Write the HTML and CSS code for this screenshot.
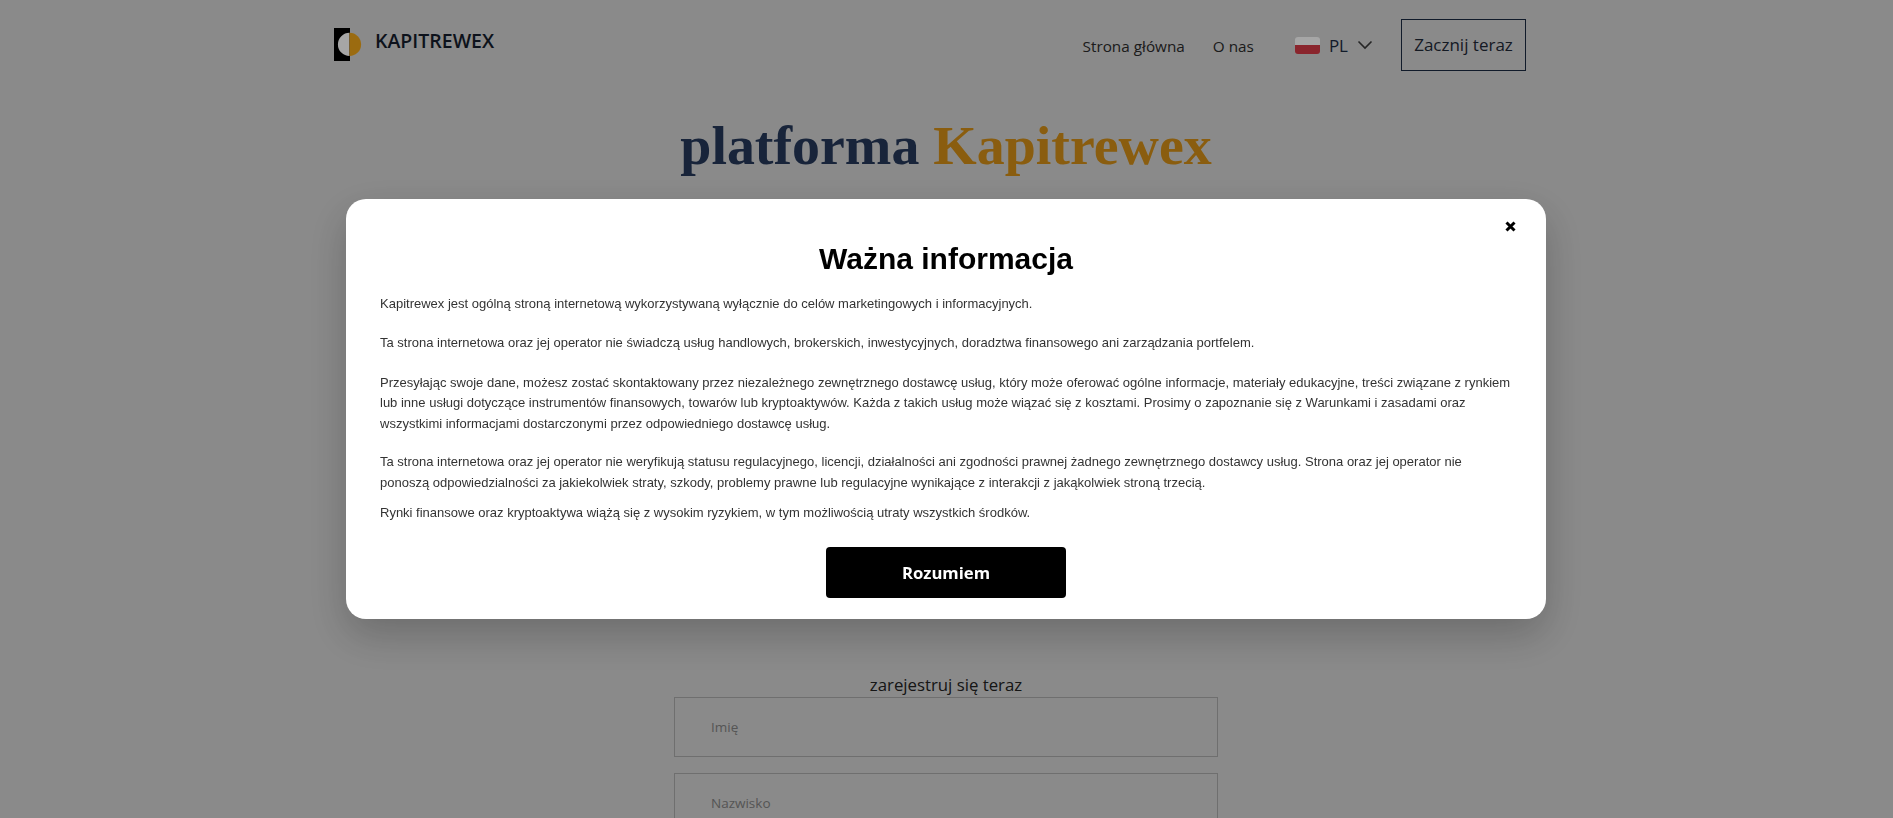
FILE: index.html
```html
<!DOCTYPE html>
<html lang="pl">
<head>
<meta charset="utf-8">
<title>Kapitrewex</title>
<link rel="stylesheet" href="styles.css">
</head>
<body>
<div class="page">
  <header class="header">
    <a class="brand">
      <svg class="brand-icon" viewBox="0 0 28 33" width="28" height="33">
        <rect x="0" y="0" width="16" height="33" fill="#000"/>
        <path d="M15.500 4.800 A11.600 11.600 0 0 0 15.500 28 Z" fill="#fff"/>
        <path d="M15.500 4.800 A11.600 11.600 0 0 1 15.500 28 Z" fill="#eea51a"/>
      </svg>
      <span class="brand-name">KAPITREWEX</span>
    </a>
    <nav class="nav">
      <a class="nav-link">Strona główna</a>
      <a class="nav-link">O nas</a>
      <div class="lang">
        <span class="flag"><span class="flag-top"></span><span class="flag-bottom"></span></span>
        <span class="lang-code">PL</span>
        <svg class="chevron" viewBox="0 0 16 10" width="16" height="10"><path d="M1.500 1.500 L8 8 L14.500 1.500" fill="none" stroke="#3a3a3a" stroke-width="1.600"/></svg>
      </div>
      <a class="cta">Zacznij teraz</a>
    </nav>
  </header>
  <h1 class="title">platforma <span class="accent">Kapitrewex</span></h1>
  <section class="register">
    <p class="register-title">zarejestruj się teraz</p>
    <div class="field">Imię</div>
    <div class="field">Nazwisko</div>
  </section>
</div>
<div class="overlay">
  <div class="modal">
    <svg class="close" viewBox="0 0 11 11" width="11" height="11"><path d="M1.500 1.500 L9.500 9.500 M9.500 1.500 L1.500 9.500" fill="none" stroke="#000" stroke-width="3"/></svg>
    <h2 class="modal-title">Ważna informacja</h2>
    <p class="para gap-first">Kapitrewex jest ogólną stroną internetową wykorzystywaną wyłącznie do celów marketingowych i informacyjnych.</p>
    <p class="para gap">Ta strona internetowa oraz jej operator nie świadczą usług handlowych, brokerskich, inwestycyjnych, doradztwa finansowego ani zarządzania portfelem.</p>
    <p class="para gap-long">Przesyłając swoje dane, możesz zostać skontaktowany przez niezależnego zewnętrznego dostawcę usług, który może oferować ogólne informacje, materiały edukacyjne, treści związane z rynkiem lub inne usługi dotyczące instrumentów finansowych, towarów lub kryptoaktywów. Każda z takich usług może wiązać się z kosztami. Prosimy o zapoznanie się z Warunkami i zasadami oraz wszystkimi informacjami dostarczonymi przez odpowiedniego dostawcę usług.</p>
    <p class="para small-gap">Ta strona internetowa oraz jej operator nie weryfikują statusu regulacyjnego, licencji, działalności ani zgodności prawnej żadnego zewnętrznego dostawcy usług. Strona oraz jej operator nie ponoszą odpowiedzialności za jakiekolwiek straty, szkody, problemy prawne lub regulacyjne wynikające z interakcji z jakąkolwiek stroną trzecią.</p>
    <p class="para">Rynki finansowe oraz kryptoaktywa wiążą się z wysokim ryzykiem, w tym możliwością utraty wszystkich środków.</p>
    <button class="confirm">Rozumiem</button>
  </div>
</div>
</body>
</html>
```
FILE: styles.css
```css
* { box-sizing: border-box; }
html, body { margin: 0; height: 100%; overflow: hidden; }
body { background: #d4d4d4; font-family: "Open Sans", sans-serif; color: #1f2937; padding-right: 1px; }
.page { width: 1200px; margin: 0 auto; }
.header { display: flex; justify-content: space-between; align-items: flex-start; padding-top: 19px; height: 113px; }
.brand { display: flex; align-items: flex-start; gap: 13px; margin-left: -12px; padding-top: 9px; }
.brand-icon { display: block; }
.brand-name { font-size: 19.500px; font-weight: 600; line-height: 26px; color: #141c2b; }
.nav { display: flex; align-items: center; font-size: 15.300px; margin-right: 20px; }
.nav-link { color: #2b2b2b; margin-right: 28px; position: relative; top: 1px; }
.lang { display: flex; align-items: center; margin-left: 13px; margin-right: 28px; }
.flag { display: flex; flex-direction: column; width: 25px; height: 17px; border-radius: 3px; overflow: hidden; margin-right: 9px; }
.flag-top { flex: 1; background: #fff; }
.flag-bottom { flex: 1; background: #d43a46; }
.lang-code { font-size: 17px; color: #1b2a41; margin-right: 9px; }
.chevron { display: block; }
.cta { border: 1px solid #1b2a41; width: 125px; text-align: center; height: 52px; line-height: 50px; font-size: 17px; color: #1f2937; }
.title { margin: 0; text-align: center; font-family: "Liberation Serif", serif; font-weight: 700; font-size: 55.900px; line-height: 64px; color: #253859; }
.accent { color: #d49017; }
.register { width: 544px; margin: 495px auto 0; }
.register-title { margin: 0; text-align: center; font-size: 16.800px; line-height: 25px; color: #222; }
.field { height: 60px; border: 1px solid #ababab; margin-bottom: 16px; padding: 0 36px; line-height: 58px; font-size: 13.500px; color: #838383; }
.overlay { position: fixed; inset: 0; background: rgba(0, 0, 0, 0.35); display: flex; justify-content: center; align-items: flex-start; padding-right: 1px; }
.modal { position: relative; width: 1200px; height: 420px; margin-top: 199px; background: #fff; border-radius: 20px; padding: 42px 34px 0; box-shadow: 0 16px 40px rgba(0, 0, 0, 0.22); font-family: "Liberation Sans", sans-serif; display: flex; flex-direction: column; }
.close { position: absolute; top: 22px; right: 30px; display: block; }
.modal-title { margin: 0 0 17px; text-align: center; font-size: 30px; line-height: 36px; font-weight: 700; color: #000; }
.para { margin: 0; font-size: 13px; line-height: 20.800px; color: #333; }
.gap-first { margin-bottom: 18px; }
.gap { margin-bottom: 19px; }
.gap-long { margin-bottom: 17px; }
.small-gap { margin-bottom: 9px; }
.confirm { align-self: center; margin-top: 24px; width: 240px; height: 51px; background: #000; color: #fff; border: 0; border-radius: 4px; font-family: "Open Sans", sans-serif; font-size: 16.700px; font-weight: 700; }
```
